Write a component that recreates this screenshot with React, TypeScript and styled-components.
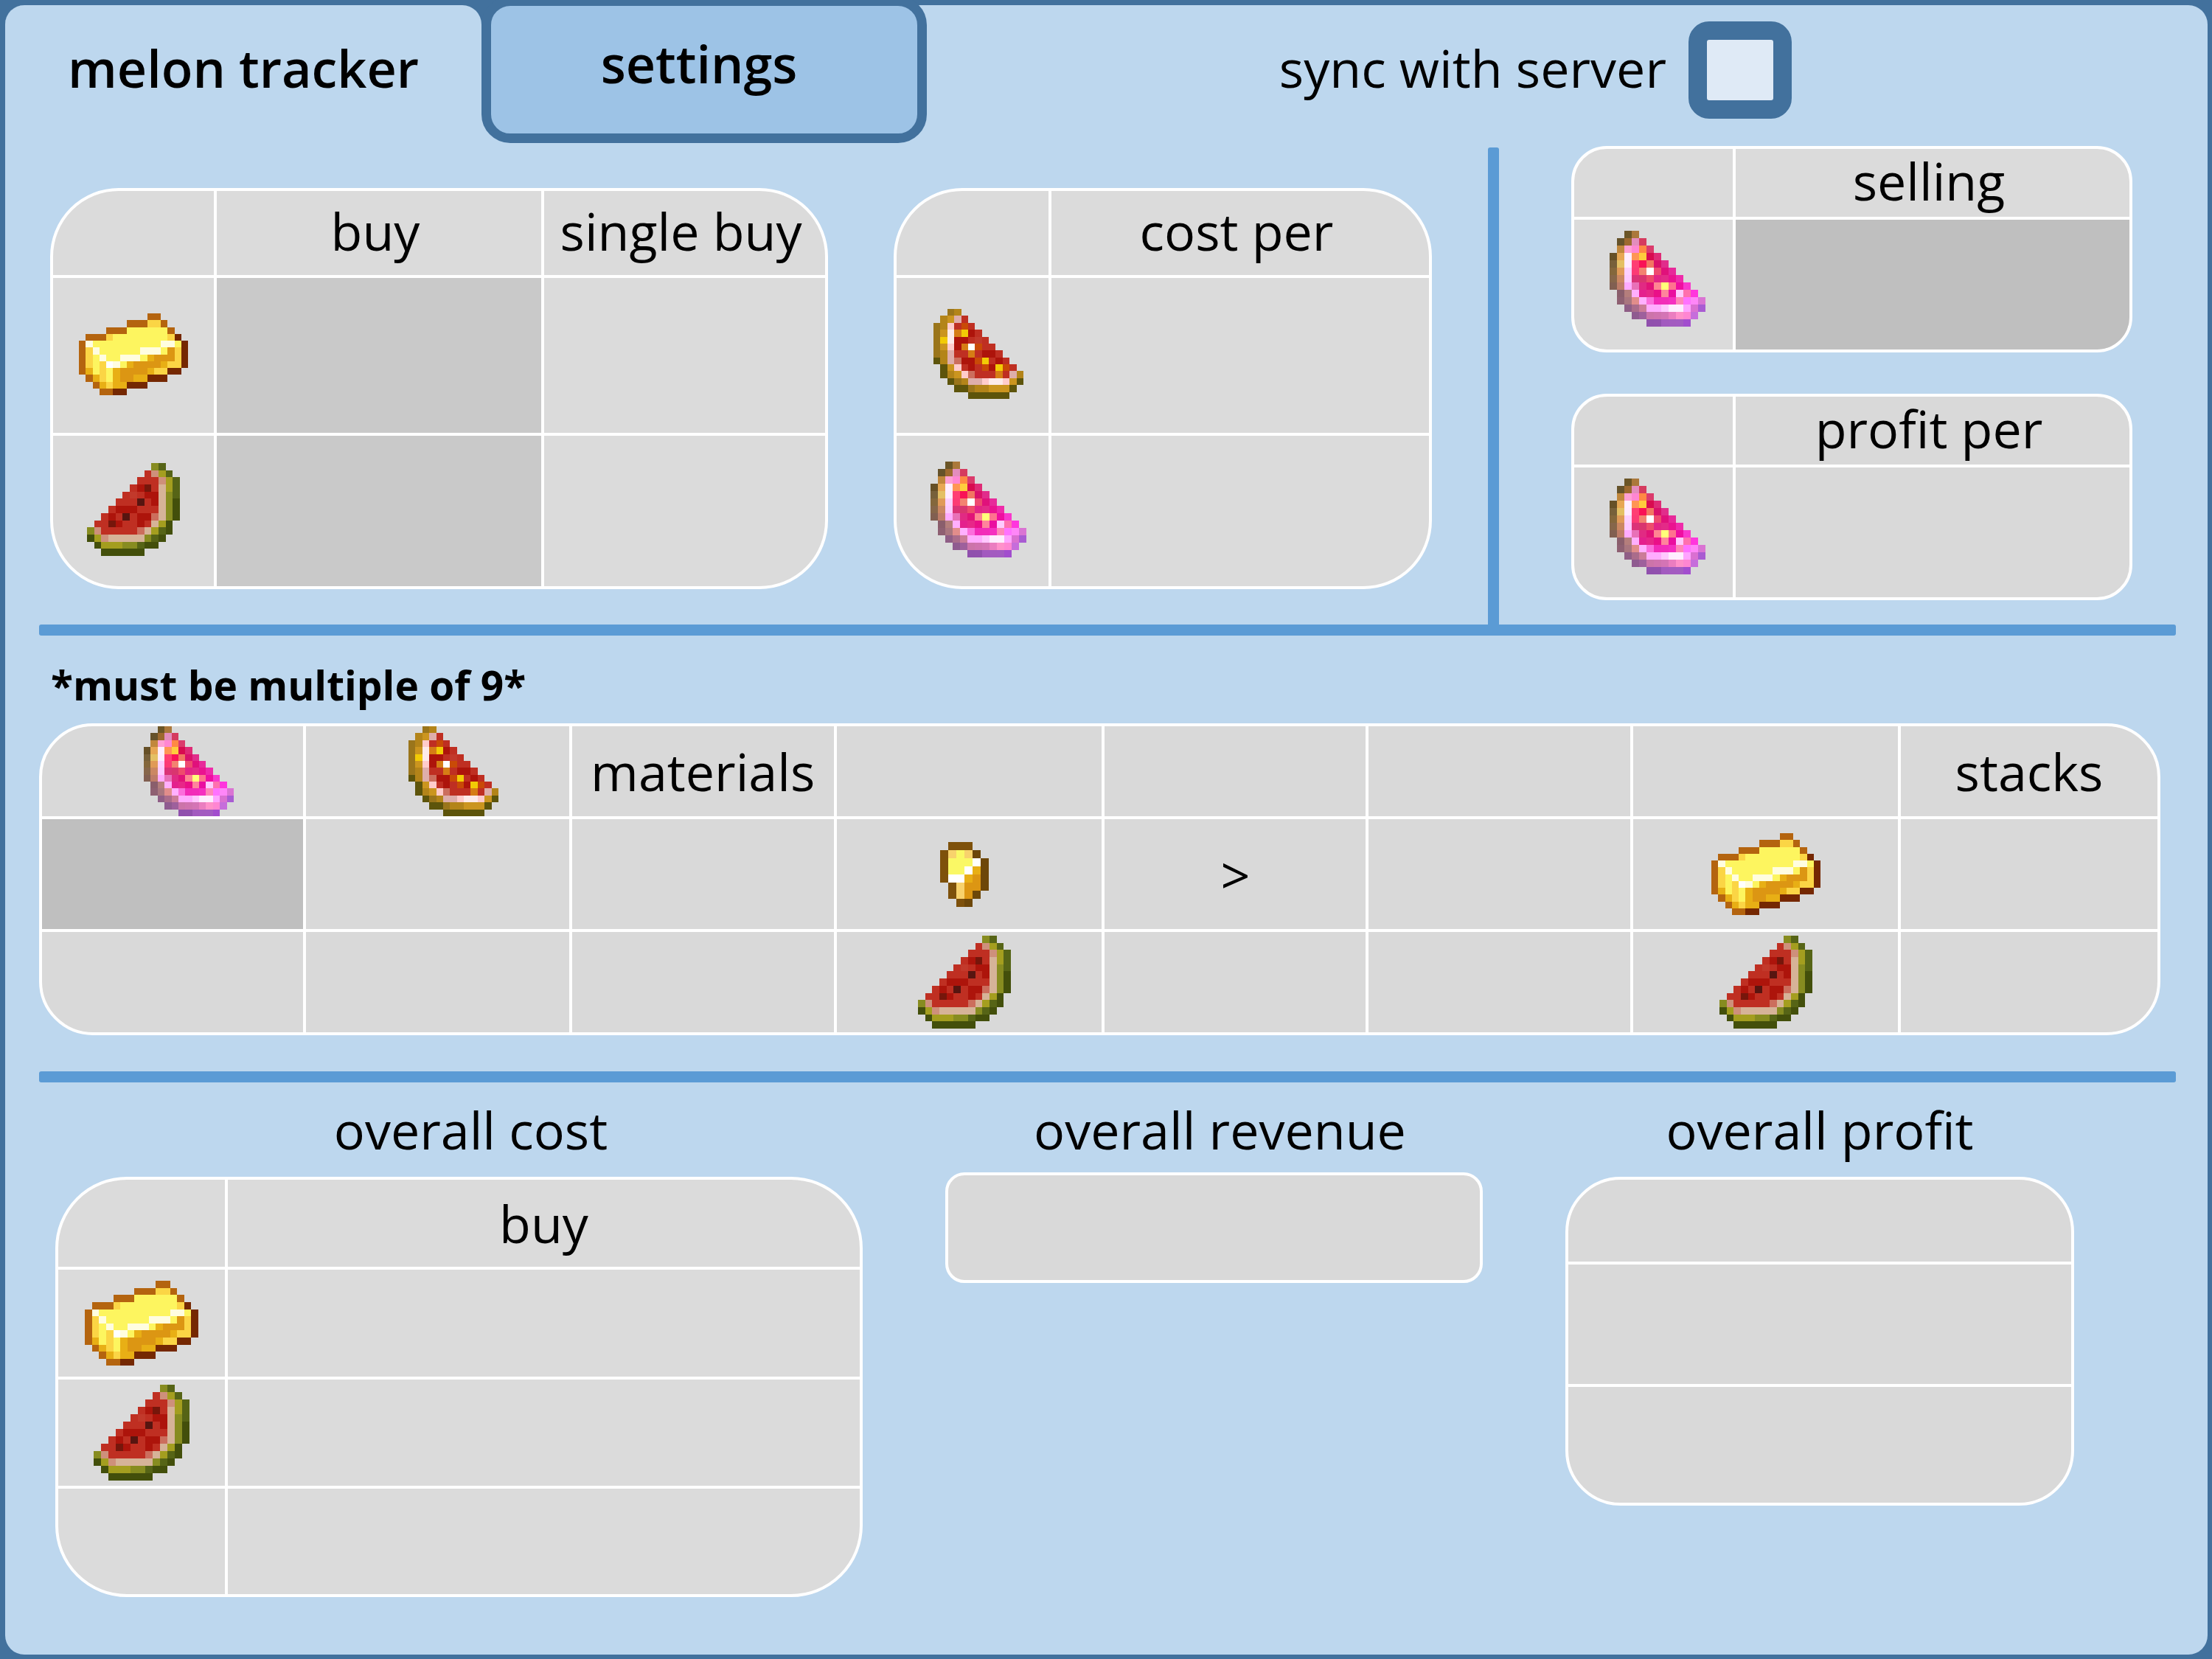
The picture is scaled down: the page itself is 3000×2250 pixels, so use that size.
import React, { useState } from "react";
import styled, { createGlobalStyle } from "styled-components";

const color = {
  frame: "#42719d",
  panel: "#bdd7ee",
  tab: "#9dc3e6",
  rule: "#5b9bd5",
  line: "#ffffff",
  cell: "#dbdbdb",
  cellMuted: "#d9d9d9",
  entrySoft: "#c9c9c9",
  entry: "#bfbfbf",
};

const GlobalStyle = createGlobalStyle`
  *, *::before, *::after { box-sizing: border-box; }
  body {
    margin: 0;
    background: ${color.frame};
    color: #000;
    font-family: "Open Sans", "Noto Sans", sans-serif;
    font-size: 70px;
    line-height: 84px;
  }
`;

/* ---------- pixel art ---------- */

type Sprite = { rows: string[]; palette: Record<string, string> };

const ingot: Sprite = {
  palette: {
    B: "#b4640f", D: "#752802", Y: "#fdf55f", y: "#fbd545",
    W: "#fffde0", P: "#ffffff", O: "#dc9613", G: "#e8af15",
  },
  rows: [
    "..........BB....",
    ".......BBByyB...",
    "....BBBYYYYYYB..",
    ".BBByYYYYYYYYyD.",
    "BWYYYYYYYYYYWWYD",
    "ByWYYYYYYWWWYOyD",
    "ByYWYYWWWYGOOOyD",
    "ByYyPWYGOOOOGyyD",
    "BGYyYGOOOOGyyDD.",
    ".BGyYGOOGGDDD...",
    "..BGyGGDDD......",
    "...BBDD.........",
  ],
};

const melon: Sprite = {
  palette: {
    a: "#878c20", b: "#566416", c: "#a49e1f", d: "#434f0b",
    r: "#bf2f22", R: "#ad140b", s: "#c2392b", k: "#76160b",
    K: "#571510", p: "#ce907b", t: "#d6b398", q: "#cc6e5d",
  },
  rows: [
    ".........ab..",
    "........rpcb.",
    ".......rrrpcb",
    "......rRkrtcb",
    ".....rsrRRtab",
    "....rrrKrRtad",
    "...rRRRrrrtad",
    "..rRrKrRRqtad",
    ".rrkRrrRrtcd.",
    "aprrrrrqtcbd.",
    "dcptttttabd..",
    ".dcccaabdd...",
    "..dddddd.....",
  ],
};

const goldMelon: Sprite = {
  palette: {
    g: "#9a751b", h: "#b38419", i: "#cb951f", j: "#5d540b",
    P: "#deaeab", w: "#ffcccb", W: "#fdebe9", V: "#ffffff",
    Y: "#f2cb06", o: "#c94a07", O: "#d67d15",
    r: "#bf2f22", R: "#ad140b", s: "#c2392b", q: "#cc6e5d",
  },
  rows: [
    "..gh.........",
    ".hiPr........",
    "ghwror.......",
    "giWOYRr......",
    "gYWRRrsr.....",
    "giwROVorr....",
    "ghPrrOrRRr...",
    "jhPqRRoYrRr..",
    ".jiwrRroRYor.",
    ".jhiwqrrrOrPh",
    "..jghPPwWWwij",
    "...jjghhiiij.",
    ".....jjjjjj..",
  ],
};

const nugget: Sprite = {
  palette: {
    n: "#7e510b", m: "#6d4709", y: "#faf865", z: "#f8d26c",
    W: "#ffffff", G: "#e8af15", O: "#dc9613",
  },
  rows: [".nnn..", "nzyzm.", "nyyyWm", "nyyWGm", "nWWGOm", ".nzOOm", ".nzOm.", "..nm.."],
};

/* Every pixel of the enchanted slice has its own tint: [first column, colours]. */
const enchantedRows: [number, string][] = [
  [2, "6b5526 ab783b"],
  [1, "65522a 9d692f e38dbd d53b5f"],
  [1, "c1873c ffa0d4 ff86d2 ff8944 db3b6c"],
  [0, "665027 e7a754 ffeeff ff9554 ffcc3d d80b50 df2b76"],
  [0, "77603a e4c064 ffebff ff3e73 f91256 f27562 d9116a e12d8b"],
  [0, "84673c e09a58 fdd0ff fc3b75 f38370 ffffff ee4a70 e0117b e72a9a"],
  [0, "86664a cb8762 fdcaff db3378 d9356f ee4c6c e32585 e32b88 ea1390 ef2baa"],
  [0, "815f51 be7c68 ffabff e871b8 e12a83 e11378 ff8592 ffff79 ff728f ef0fa0 f938cc"],
  [1, "8a5e6c b47e7c ffaffd e4208d e72788 ea1088 ff849c ea0fa0 ffcaff ff70ae ff36dd"],
  [1, "8e6072 a9767f e18d8b ffb0ff fb6edb f22cb8 f22db9 f530c0 ff85b8 ff72ff ff86f8 da74d3"],
  [2, "8f5e86 aa6c8b cb7c98 ffacff ffacff ffc8ff ffedff ffeeff ffa4ff da70d1 a95cd2"],
  [3, "8f5b90 9e609c cc74a9 d073af d474b5 eb7dc0 ff91ca ff86d2 c66ddb"],
  [5, "9050ad 9150ae a25abf a35bc0 a35bc2 a24dce"],
];

type Pixel = { x: number; y: number; fill: string };

const toPixels = ({ rows, palette }: Sprite): Pixel[] =>
  rows.flatMap((row, y) =>
    [...row].flatMap((key, x) => (key === "." ? [] : [{ x, y, fill: palette[key] }]))
  );

const art = {
  ingot: { cols: 16, rows: 12, label: "gold ingot", pixels: toPixels(ingot) },
  melon: { cols: 13, rows: 13, label: "melon slice", pixels: toPixels(melon) },
  gold: { cols: 13, rows: 13, label: "glistering melon", pixels: toPixels(goldMelon) },
  nugget: { cols: 6, rows: 8, label: "gold nugget", pixels: toPixels(nugget) },
  enchanted: {
    cols: 13,
    rows: 13,
    label: "enchanted glistering melon",
    pixels: enchantedRows.flatMap(([start, tints], y) =>
      tints.split(" ").map((tint, i) => ({ x: start + i, y, fill: `#${tint}` }))
    ),
  },
};

const SpriteSvg = styled.svg<{ $width: number }>`
  display: block;
  width: ${(p) => p.$width}px;
  height: auto;
  margin: 0 auto;
`;

function Item({ kind, width }: { kind: keyof typeof art; width: number }) {
  const { cols, rows, label, pixels } = art[kind];
  return (
    <SpriteSvg
      $width={width}
      viewBox={`0 0 ${cols} ${rows}`}
      role="img"
      aria-label={label}
      shapeRendering="crispEdges"
    >
      {pixels.map((p) => (
        <rect key={`${p.x}-${p.y}`} x={p.x} y={p.y} width={1} height={1} fill={p.fill} />
      ))}
    </SpriteSvg>
  );
}

/* ---------- page frame ---------- */

const Frame = styled.div`
  display: flex;
  min-height: 100vh;
  padding: 7px 6px 6px 7px;
  background: ${color.frame};
  overflow: hidden;
`;

const Panel = styled.main`
  flex: 1;
  min-width: 0;
  border-radius: 26px;
  background: ${color.panel};
`;

const Header = styled.header`
  display: flex;
  justify-content: space-between;
  align-items: flex-start;
  height: 187px;
`;

const TabList = styled.nav`
  display: flex;
  height: 100%;
`;

const TabSlot = styled.div`
  display: flex;
  border-radius: 26px 0 0 0;
  background: ${color.frame};
`;

const SideTabSlot = styled.div`
  display: flex;
  background: linear-gradient(${color.frame}, ${color.frame}) left top / 40px 40px no-repeat;
`;

const Tab = styled.button`
  border: 0;
  padding: 0 0 18px;
  font: inherit;
  font-weight: 600;
  color: inherit;
  cursor: pointer;
`;

const ActiveTab = styled(Tab)`
  width: 646px;
  border-radius: 26px 26px 0 0;
  background: ${color.panel};
`;

const SideTab = styled(Tab)`
  width: 604px;
  margin-top: -12px;
  padding-right: 14px;
  border: 13px solid ${color.frame};
  border-radius: 39px;
  background: ${color.tab};
`;

const SyncLabel = styled.label`
  display: flex;
  align-items: center;
  gap: 30px;
  margin: 22px 564px 0 0;
  white-space: nowrap;
  cursor: pointer;
`;

const SyncText = styled.span`
  padding-bottom: 6px;
`;

const SyncBox = styled.input`
  appearance: none;
  width: 140px;
  height: 132px;
  margin: 0;
  border: 25px solid ${color.frame};
  border-radius: 28px;
  background: #dfeaf6;
  cursor: pointer;

  &:checked {
    background: ${color.rule};
  }
`;

const Content = styled.div`
  padding: 0 43px 0 46px;
`;

/* ---------- sections ---------- */

const Rule = styled.hr`
  height: 15px;
  margin: 0;
  border: 0;
  border-radius: 3px;
  background: ${color.rule};
`;

const UprightRule = styled.div`
  margin-top: 2px;
  border-radius: 3px 3px 0 0;
  background: ${color.rule};
`;

const PriceSection = styled.section`
  display: grid;
  grid-template-columns: 1965fr 15px 918fr;
  padding-top: 4px;
`;

const CostGroup = styled.div`
  display: grid;
  grid-template-columns: 1055fr 730fr;
  gap: 89px;
  align-items: start;
  padding: 57px 76px 48px 15px;
`;

const SaleGroup = styled.div`
  display: flex;
  flex-direction: column;
  gap: 56px;
  padding: 0 59px 33px 98px;
`;

const CraftSection = styled.section`
  padding: 31px 21px 49px 0;
`;

const Note = styled.p`
  margin: 0 0 16px 16px;
  font-size: 55px;
  line-height: 72px;
  font-weight: 700;
`;

const TotalsSection = styled.section`
  display: grid;
  grid-template-columns: 1095fr 729fr 690fr;
  gap: 112px;
  align-items: start;
  padding: 22px 138px 76px 22px;
`;

const TotalTitle = styled.h2<{ $indent?: number; $gap?: number }>`
  margin: 0 0 ${(p) => p.$gap ?? 22}px;
  padding-left: ${(p) => p.$indent ?? 0}px;
  font: inherit;
  text-align: center;
`;

const RevenueBox = styled.output`
  display: block;
  height: 150px;
  border: 4px solid ${color.line};
  border-radius: 26px;
  background: ${color.cellMuted};
`;

/* ---------- tables ---------- */

const Card = styled.div<{ $radius: number; $muted?: boolean }>`
  border: 4px solid ${color.line};
  border-radius: ${(p) => p.$radius}px;
  background: ${(p) => (p.$muted ? color.cellMuted : color.cell)};
  overflow: hidden;
`;

const Grid = styled.table`
  width: 100%;
  table-layout: fixed;
  border-collapse: separate;
  border-spacing: 0;

  td, th {
    padding: 0;
    font-weight: 400;
    text-align: center;
    vertical-align: middle;
    white-space: nowrap;
  }
  tr > * + * { border-left: 4px solid ${color.line}; }
  tr + tr > * { border-top: 4px solid ${color.line}; }
`;

/* Price tables set their titles and items slightly above the middle of a cell. */
const PriceGrid = styled(Grid)`
  th { padding: 0 10px 6px 0; }
  td { padding-bottom: 4px; }
`;

const SliceGrid = styled(PriceGrid)`
  td { padding-left: 16px; }
`;

const SaleGrid = styled(PriceGrid)`
  td { padding: 0 0 16px 10px; }
`;

const Col = styled.col<{ $share: number }>`
  width: ${(p) => p.$share}%;
`;

const Row = styled.tr<{ $height: number }>`
  height: ${(p) => p.$height}px;
`;

const ShiftedCell = styled.th`
  && { padding-left: 44px; }
`;

const EntryCell = styled.td<{ $tone: string }>`
  && {
    height: 1px;
    padding: 0;
    background: ${(p) => p.$tone};
  }
`;

const Entry = styled.input`
  display: block;
  width: 100%;
  height: 100%;
  border: 0;
  padding: 0 16px;
  background: transparent;
  font: inherit;
  text-align: center;
  outline-offset: -8px;
`;

const Compare = styled.span`
  font-size: 70px;
`;

const InsetCell = styled.td`
  && { padding-right: 14px; }
`;

function Cols({ widths }: { widths: number[] }) {
  const total = widths.reduce((sum, w) => sum + w, 0);
  return (
    <colgroup>
      {widths.map((w, i) => (
        <Col key={i} $share={(w / total) * 100} />
      ))}
    </colgroup>
  );
}

function EntryField({ label, tone }: { label: string; tone: string }) {
  return (
    <EntryCell $tone={tone}>
      <Entry type="text" inputMode="decimal" aria-label={label} />
    </EntryCell>
  );
}

function BuyTable() {
  return (
    <Card $radius={93}>
      <PriceGrid>
        <Cols widths={[218, 444, 385]} />
        <tbody>
          <Row $height={114}><td /><th scope="col">buy</th><th scope="col">single buy</th></Row>
          <Row $height={214}>
            <td><Item kind="ingot" width={148} /></td>
            <EntryField label="gold ingot buy price" tone={color.entrySoft} />
            <td />
          </Row>
          <Row $height={208}>
            <td><Item kind="melon" width={126} /></td>
            <EntryField label="melon slice buy price" tone={color.entrySoft} />
            <td />
          </Row>
        </tbody>
      </PriceGrid>
    </Card>
  );
}

function CostTable() {
  return (
    <Card $radius={93}>
      <SliceGrid>
        <Cols widths={[206, 516]} />
        <tbody>
          <Row $height={114}><td /><th scope="col">cost per</th></Row>
          <Row $height={214}><td><Item kind="gold" width={122} /></td><td /></Row>
          <Row $height={208}><td><Item kind="enchanted" width={130} /></td><td /></Row>
        </tbody>
      </SliceGrid>
    </Card>
  );
}

function SaleTable({ title, editable }: { title: string; editable?: boolean }) {
  return (
    <Card $radius={48} $muted={!editable}>
      <SaleGrid>
        <Cols widths={[215, 538]} />
        <tbody>
          <Row $height={92}><td /><th scope="col">{title}</th></Row>
          <Row $height={180}>
            <td><Item kind="enchanted" width={130} /></td>
            {editable ? <EntryField label={`${title} price`} tone={color.entry} /> : <td />}
          </Row>
        </tbody>
      </SaleGrid>
    </Card>
  );
}

function CraftTable() {
  return (
    <Card $radius={73} $muted>
      <Grid>
        <Cols widths={[354, 361, 359, 364, 358, 359, 363, 352]} />
        <tbody>
          <Row $height={122}>
            <ShiftedCell scope="col"><Item kind="enchanted" width={122} /></ShiftedCell>
            <ShiftedCell scope="col"><Item kind="gold" width={122} /></ShiftedCell>
            <th scope="col">materials</th>
            <td /><td /><td /><td />
            <th scope="col">stacks</th>
          </Row>
          <Row $height={153}>
            <EntryField label="enchanted melons to craft" tone={color.entry} />
            <td /><td />
            <InsetCell><Item kind="nugget" width={66} /></InsetCell>
            <td><Compare>&gt;</Compare></td>
            <td />
            <td><Item kind="ingot" width={148} /></td>
            <td />
          </Row>
          <Row $height={140}>
            <td /><td /><td />
            <InsetCell><Item kind="melon" width={126} /></InsetCell>
            <td /><td />
            <td><Item kind="melon" width={126} /></td>
            <td />
          </Row>
        </tbody>
      </Grid>
    </Card>
  );
}

function OverallCostTable() {
  return (
    <Card $radius={97}>
      <Grid>
        <Cols widths={[226, 861]} />
        <tbody>
          <Row $height={118}><td /><th scope="col">buy</th></Row>
          <Row $height={149}><td><Item kind="ingot" width={154} /></td><td /></Row>
          <Row $height={148}><td><Item kind="melon" width={130} /></td><td /></Row>
          <Row $height={147}><td /><td /></Row>
        </tbody>
      </Grid>
    </Card>
  );
}

function OverallProfitTable() {
  return (
    <Card $radius={75} $muted>
      <Grid>
        <tbody>
          <Row $height={111}><td /></Row>
          <Row $height={166}><td /></Row>
          <Row $height={161}><td /></Row>
        </tbody>
      </Grid>
    </Card>
  );
}

export default function App() {
  const [synced, setSynced] = useState(false);
  return (
    <Frame>
      <GlobalStyle />
      <Panel>
        <Header>
          <TabList>
            <TabSlot><ActiveTab type="button" aria-current="page">melon tracker</ActiveTab></TabSlot>
            <SideTabSlot><SideTab type="button">settings</SideTab></SideTabSlot>
          </TabList>
          <SyncLabel htmlFor="sync">
            <SyncText>sync with server</SyncText>
            <SyncBox
              id="sync"
              type="checkbox"
              checked={synced}
              onChange={(e) => setSynced(e.target.checked)}
            />
          </SyncLabel>
        </Header>
        <Content>
          <PriceSection>
            <CostGroup>
              <BuyTable />
              <CostTable />
            </CostGroup>
            <UprightRule />
            <SaleGroup>
              <SaleTable title="selling" editable />
              <SaleTable title="profit per" />
            </SaleGroup>
          </PriceSection>
          <Rule />
          <CraftSection>
            <Note>*must be multiple of 9*</Note>
            <CraftTable />
          </CraftSection>
          <Rule />
          <TotalsSection>
            <div>
              <TotalTitle $indent={32}>overall cost</TotalTitle>
              <OverallCostTable />
            </div>
            <div>
              <TotalTitle $indent={16} $gap={16}>overall revenue</TotalTitle>
              <RevenueBox />
            </div>
            <div>
              <TotalTitle>overall profit</TotalTitle>
              <OverallProfitTable />
            </div>
          </TotalsSection>
        </Content>
      </Panel>
    </Frame>
  );
}
